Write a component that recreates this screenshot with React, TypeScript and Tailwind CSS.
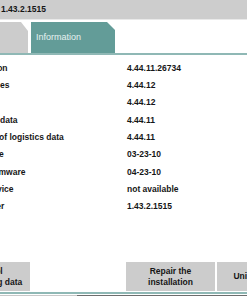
const rows = [
  { label: "Program version", value: "4.44.11.26734" },
  { label: "Supported series", value: "4.44.12" },
  { label: "Data version", value: "4.44.12" },
  { label: "Version of KIS data", value: "4.44.11" },
  { label: "Release dates of logistics data", value: "4.44.11" },
  { label: "DB release date", value: "03-23-10" },
  { label: "Date of new firmware", value: "04-23-10" },
  { label: "Type of the device", value: "not available" },
  { label: "Version number", value: "1.43.2.1515" },
];

const font = { fontFamily: '"Liberation Sans", Arial, sans-serif' };

const App = () => {
  return (
    <div
      className="w-[247px] h-[296px] overflow-hidden bg-white flex flex-col text-[#161616]"
      style={font}
    >
      {/* header bar */}
      <div className="h-[19px] bg-[#cdcdcd] flex items-center pl-[1px] text-[8.5px] font-bold shrink-0">
        1.43.2.1515
      </div>
      <div className="h-[1px] bg-[#e9e9e9] shrink-0" />

      {/* tabs */}
      <div className="mt-[2px] h-[31px] flex gap-[3px] shrink-0">
        <div className="w-[28px] bg-[#cccccc] [clip-path:polygon(0_0,21px_0,28px_9px,28px_100%,0_100%)]" />
        <div className="w-[84px] bg-[#639c98] flex items-center pl-[5px] text-[9px] text-[#e6f2f0] [clip-path:polygon(0_0,76px_0,84px_8px,84px_100%,0_100%)]">
          Information
        </div>
      </div>
      <div className="h-[2px] bg-[#8fb8b5] shrink-0" />

      {/* info rows */}
      <div className="pt-[4.4px] ml-[-60px] grid grid-cols-[187px_1fr] text-[8.5px] font-bold">
        {rows.map((row, i) => (
          <div key={i} className="contents">
            <div className="h-[17.35px] flex items-center whitespace-nowrap">{row.label}</div>
            <div className="h-[17.35px] flex items-center whitespace-nowrap">{row.value}</div>
          </div>
        ))}
      </div>

      <div className="flex-1" />

      {/* buttons */}
      <div className="flex h-[29px] ml-[-59px] shrink-0 text-[8.5px] font-bold leading-[11px] text-center">
        <div className="w-[89px] shrink-0 bg-[#cccccc] flex items-center justify-center">
          Protocol
          <br />
          Send logging data
        </div>
        <div className="w-[89px] shrink-0 ml-[96px] bg-[#cccccc] flex items-center justify-center">
          Repair the
          <br />
          installation
        </div>
        <div className="w-[89px] shrink-0 ml-[2px] bg-[#cccccc] flex items-center justify-center">
          Uninstallation
        </div>
      </div>
      <div className="h-[1px] shrink-0" />
      <div className="h-[2px] bg-[#8fb8b5] shrink-0" />
      <div className="h-[1px] shrink-0" />
      <div className="h-[1px] flex shrink-0">
        <div className="w-[77px] bg-[#c8c8c8]" />
        <div className="flex-1 bg-[#6e6e6e]" />
      </div>
    </div>
  );
};

export default App;
